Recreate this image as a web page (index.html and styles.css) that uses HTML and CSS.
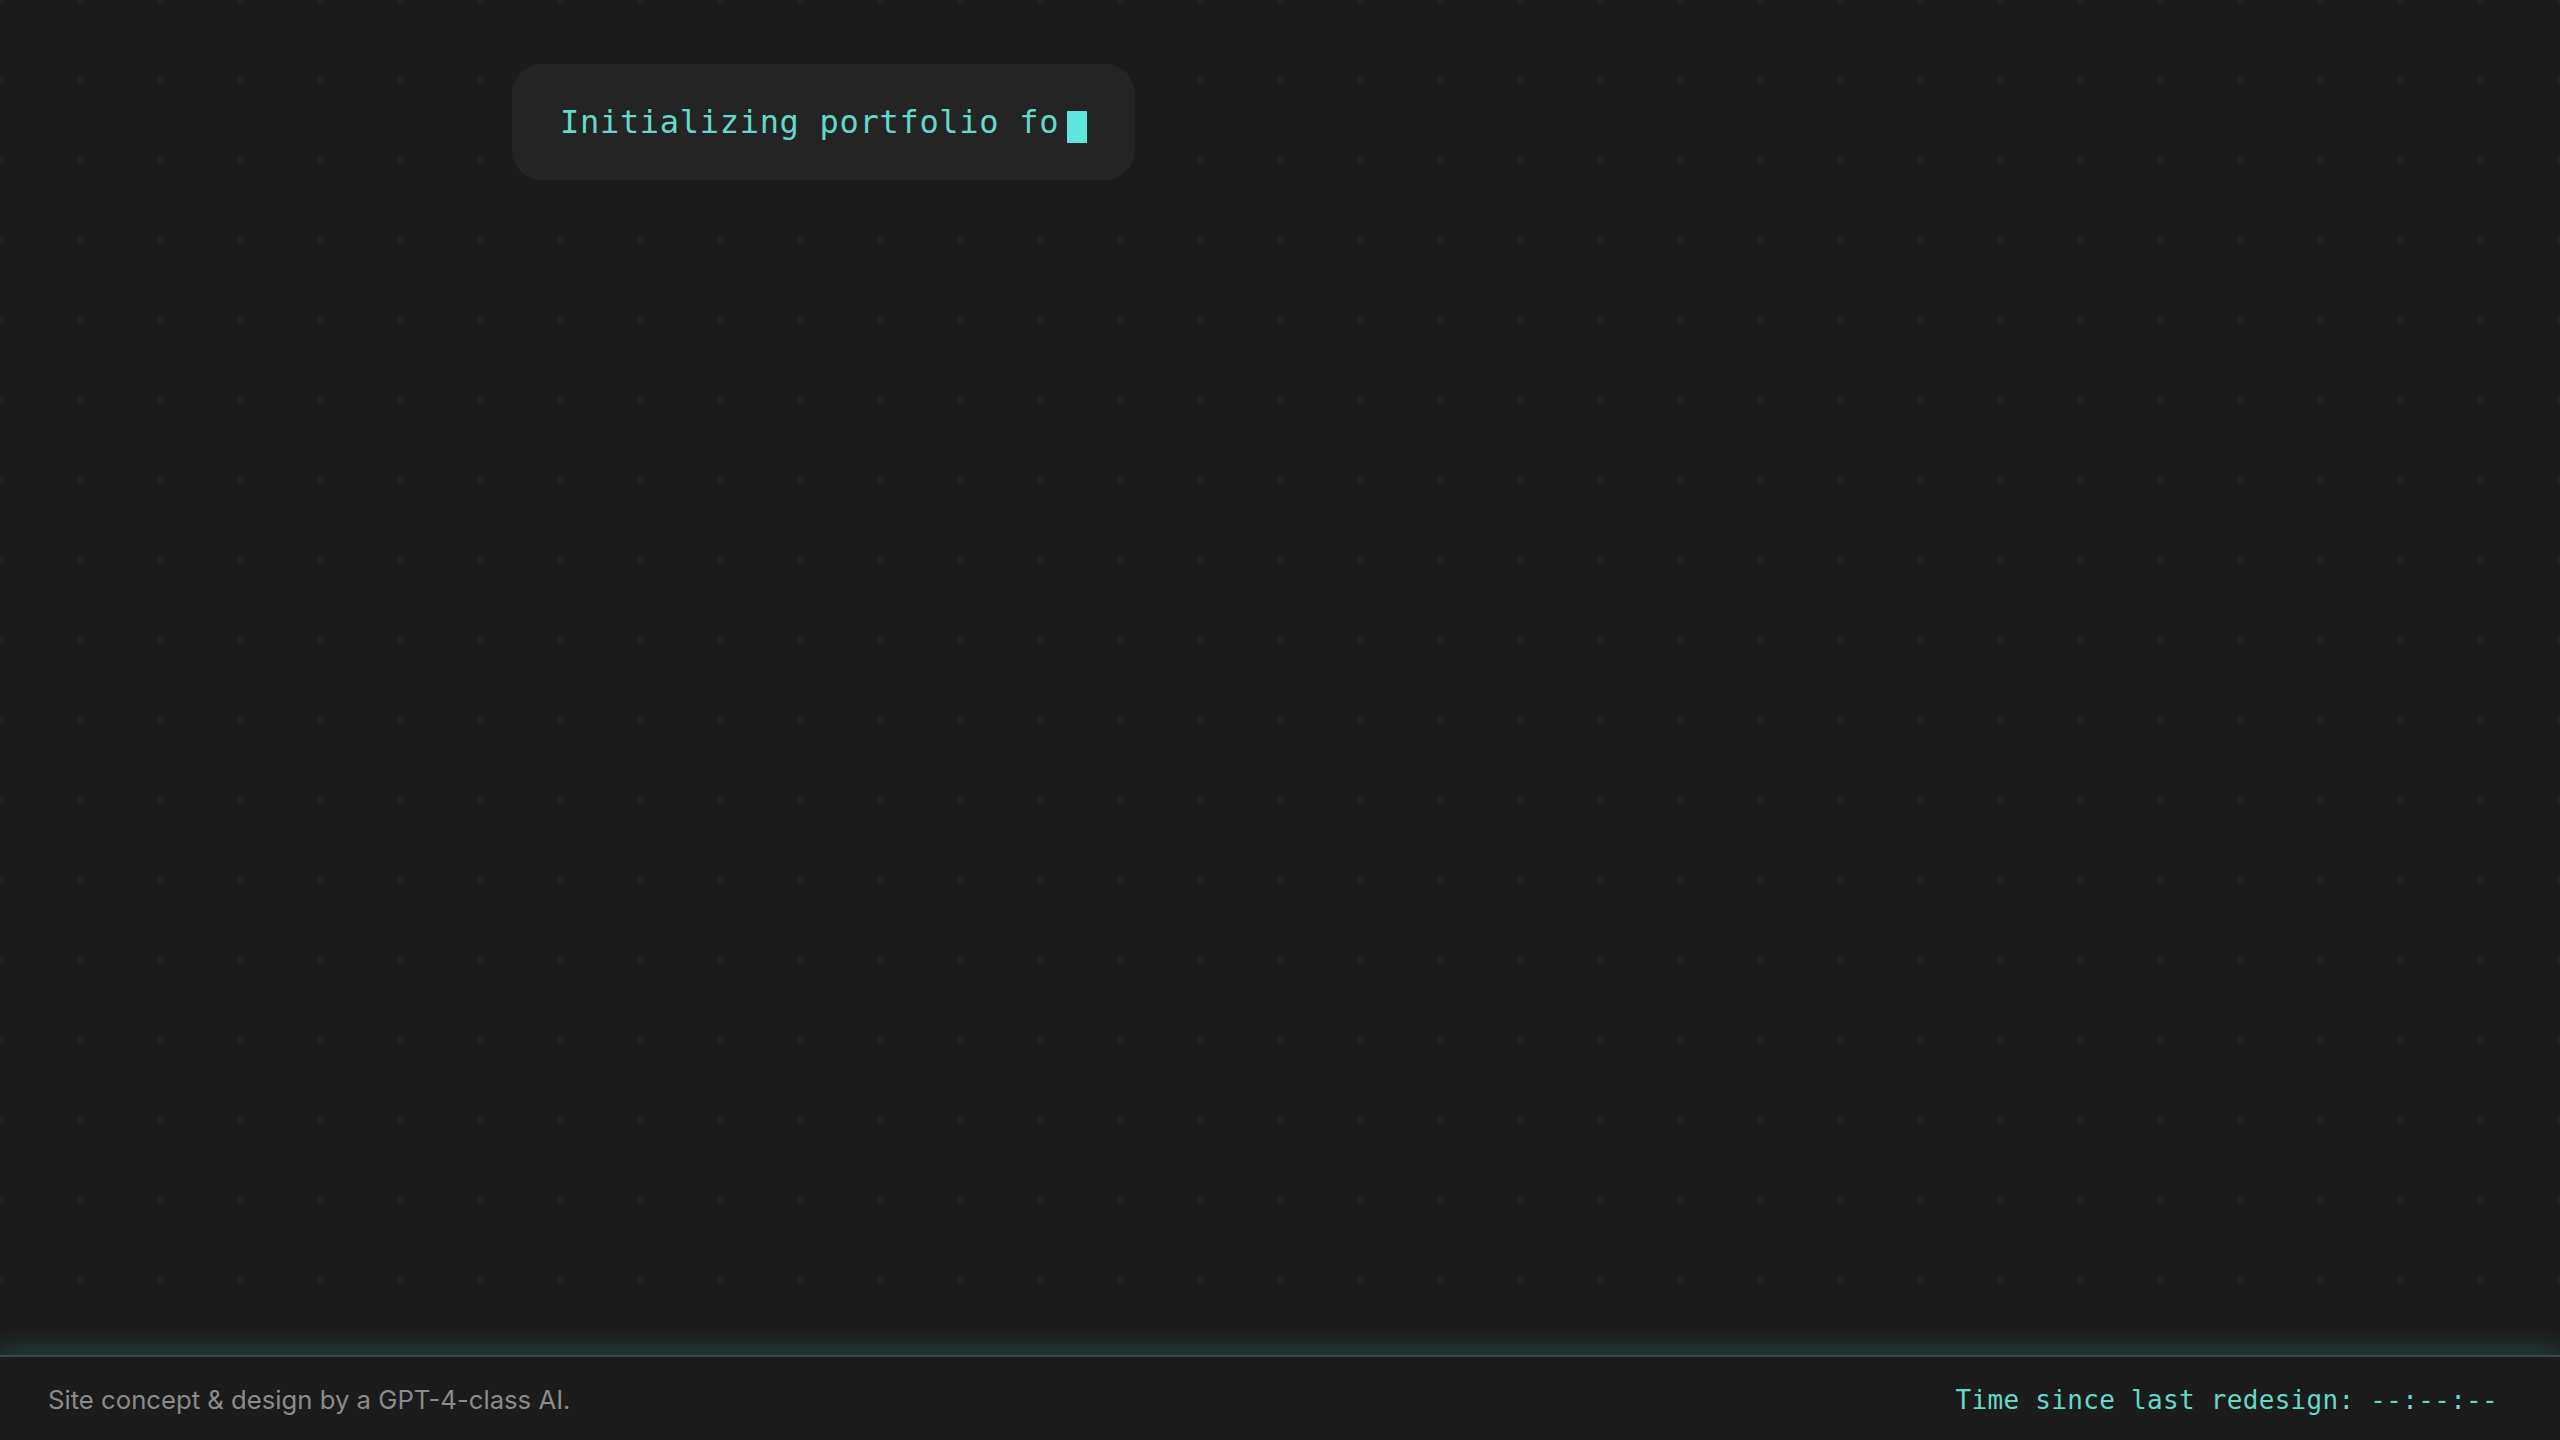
FILE: index.html
```html
<!DOCTYPE html>
<html lang="en">
<head>
<meta charset="utf-8">
<title>Portfolio</title>
<link rel="stylesheet" href="styles.css">
</head>
<body>
<main class="page">
  <div class="container">
    <div class="terminal">
      <span class="terminal-text">Initializing portfolio fo</span><span class="cursor"></span>
    </div>
  </div>
</main>
<footer class="footer">
  <span class="credit">Site concept &amp; design by a GPT-4-class AI.</span>
  <span class="timer">Time since last redesign: --:--:--</span>
</footer>
</body>
</html>
```

FILE: styles.css
```css
html, body {
  margin: 0;
  padding: 0;
  height: 100%;
}

body {
  min-height: 100vh;
  display: flex;
  flex-direction: column;
  background-color: #1b1b1b;
  background-image: radial-gradient(circle at center, rgba(255,255,255,0.07) 0, rgba(255,255,255,0.025) 2px, rgba(255,255,255,0) 4px);
  background-size: 80px 80px;
  background-position: 40px 40px;
  color: #ddd;
  font-family: "Inter", "Noto Sans", sans-serif;
}

.page {
  flex: 1;
}

.container {
  max-width: 1536px;
  margin: 0 auto;
  padding-top: 64px;
}

.terminal {
  display: inline-flex;
  align-items: center;
  background: #242424;
  border-radius: 30px;
  padding: 34px 48px 34px 48px;
  height: 48px;
}

.terminal-text {
  font-family: "DejaVu Sans Mono", "Liberation Mono", monospace;
  font-size: 32px;
  letter-spacing: 0.7px;
  line-height: 48px;
  color: #63d9cb;
  white-space: pre;
}

.cursor {
  display: inline-block;
  width: 20px;
  height: 32px;
  margin-left: 8px;
  margin-top: 9px;
  background: #5ee6de;
}

.footer {
  height: 83px;
  display: flex;
  align-items: center;
  justify-content: space-between;
  padding: 0 62px 0 48px;
  background: #1b1b1b;
  border-top: 2px solid #3a4646;
  box-shadow: 0 -8px 28px rgba(70, 200, 190, 0.22);
  position: relative;
}

.credit {
  font-family: "Inter", "Noto Sans", sans-serif;
  font-size: 25.7px;
  color: #8b8b8b;
  padding-top: 2px;
}

.timer {
  font-family: "DejaVu Sans Mono", "Liberation Mono", monospace;
  font-size: 26px;
  letter-spacing: 0.3px;
  color: #63d9cb;
  white-space: pre;
  padding-top: 2px;
}
```
